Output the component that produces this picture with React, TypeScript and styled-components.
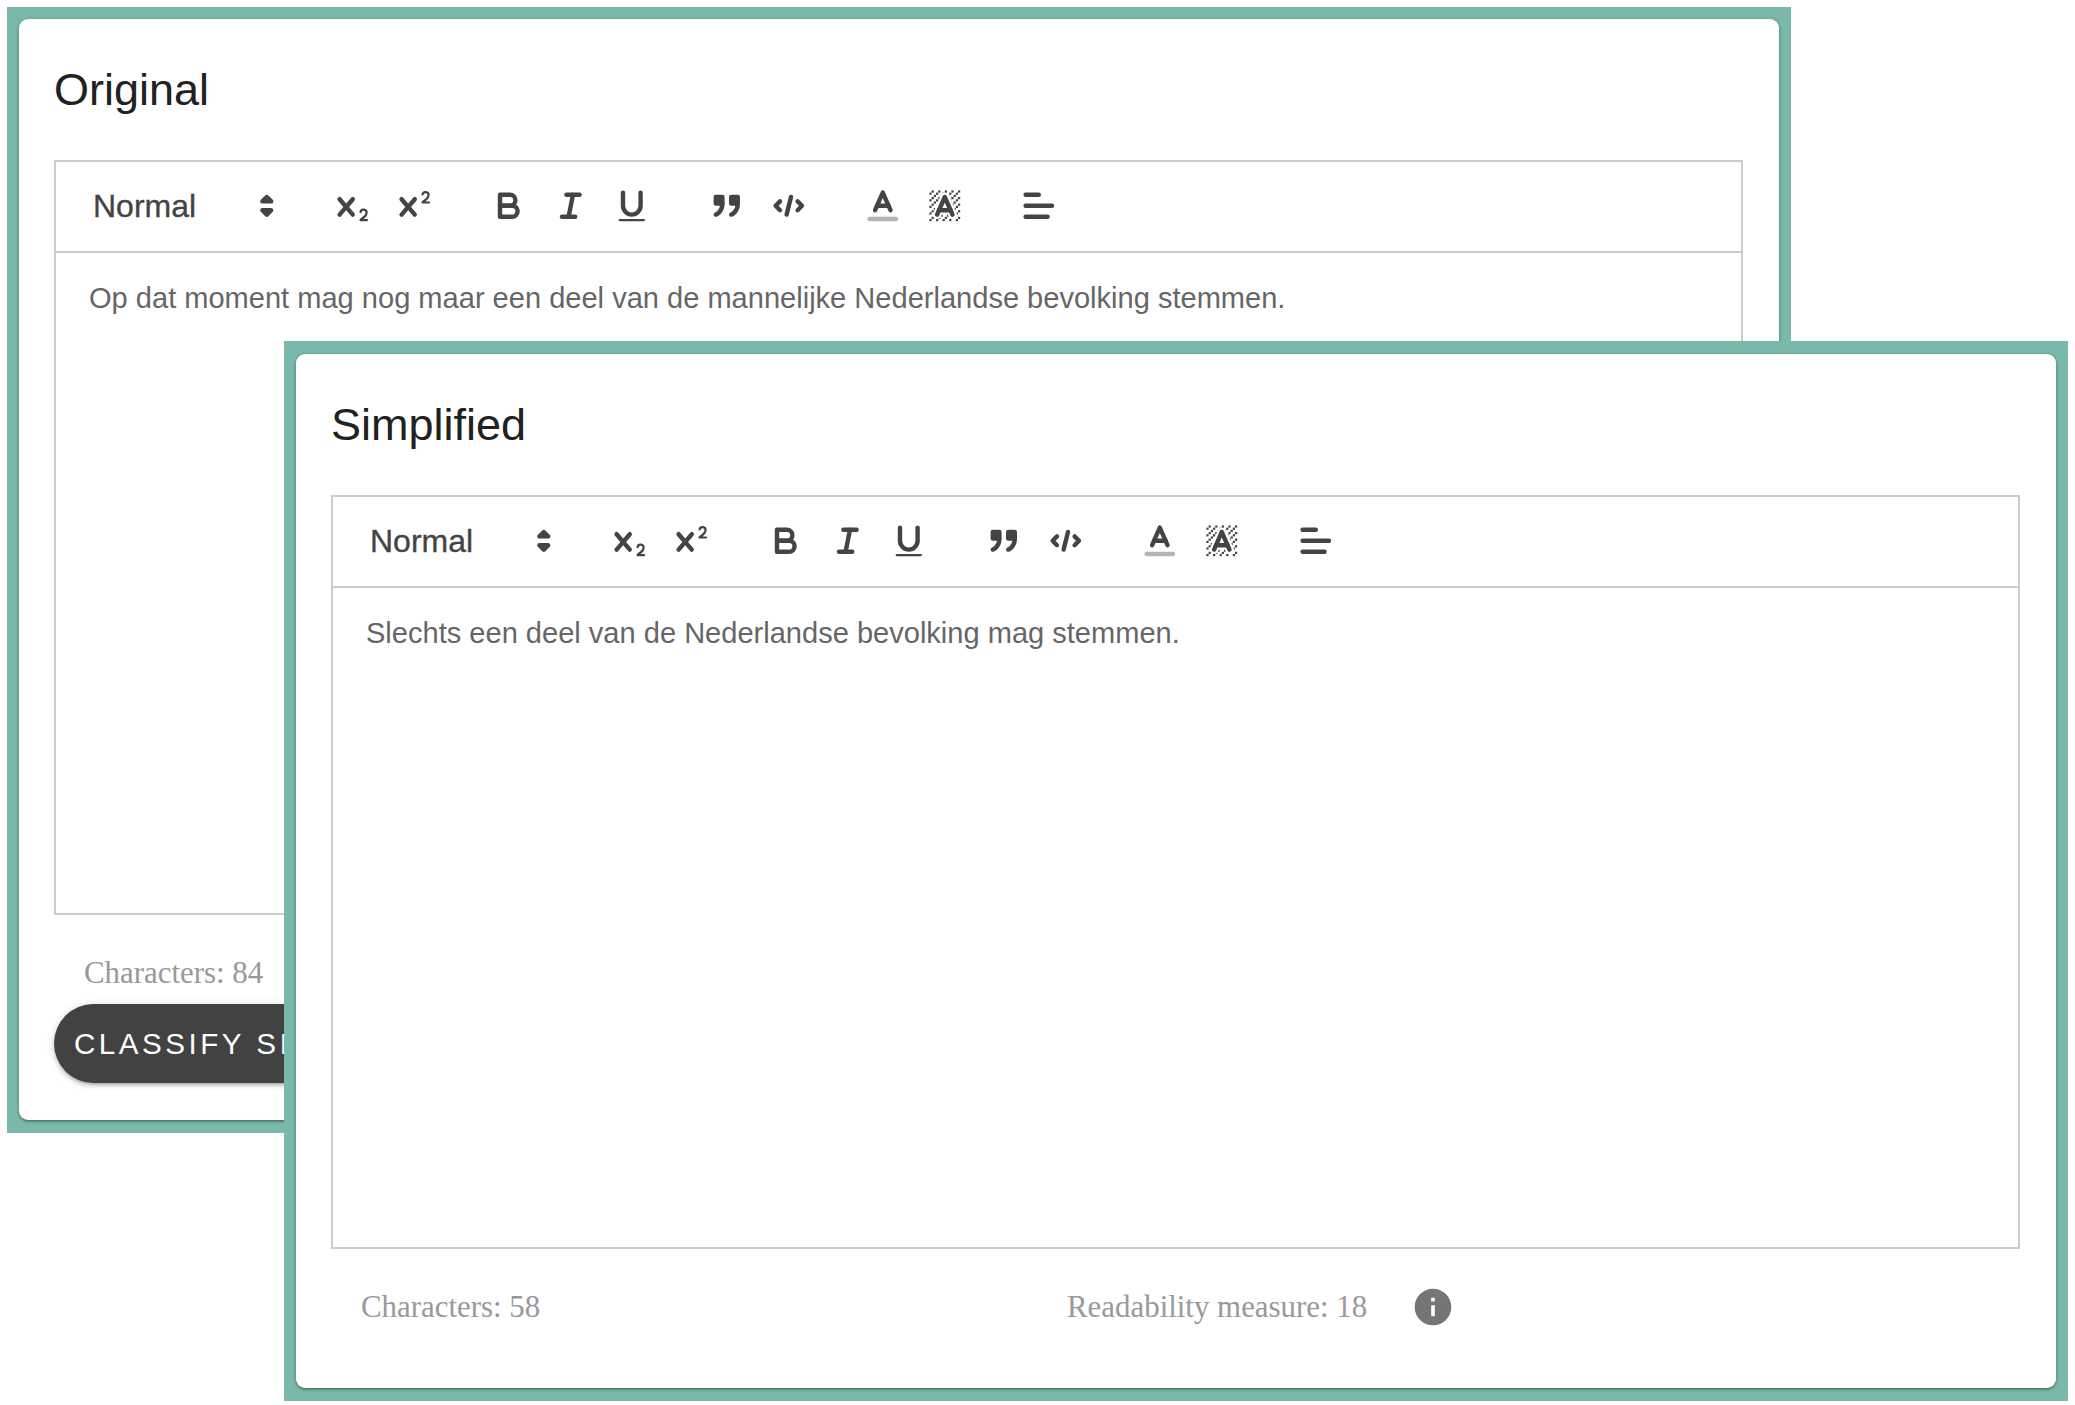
import styled, { createGlobalStyle } from 'styled-components'

const GlobalStyle = createGlobalStyle`
  html, body {
    margin: 0;
    padding: 0;
    background: #fff;
  }
  body {
    font-family: "Liberation Sans", Arial, sans-serif;
  }
`

const Desktop = styled.div`
  position: relative;
  width: 2075px;
  height: 1405px;
  overflow: hidden;
  background: #fff;
`

// the two panels are floating windows that overlap each other
const Window = styled.section<{ $left: number; $top: number; $frameTop: number }>`
  position: absolute;
  left: ${(p) => p.$left}px;
  top: ${(p) => p.$top}px;
  width: 1784px;
  box-sizing: border-box;
  padding: ${(p) => p.$frameTop}px 12px 13px;
  background: #7ab8ab;
`

const Panel = styled.div<{ $height: number }>`
  box-sizing: border-box;
  height: ${(p) => p.$height}px;
  padding: 0 36px 0 35px;
  background: #fff;
  border-radius: 9px;
  box-shadow: 0 2px 3px -1px rgba(0, 0, 0, 0.25), 0 1px 3px 0 rgba(0, 0, 0, 0.2), 0 1px 4px 0 rgba(0, 0, 0, 0.14);
`

const Title = styled.h2`
  margin: 0;
  height: 141px;
  padding-top: 45px;
  box-sizing: border-box;
  font-size: 45px;
  line-height: 52px;
  font-weight: 400;
  color: #212121;
`

const Editor = styled.div<{ $height: number }>`
  height: ${(p) => p.$height}px;
  box-sizing: border-box;
  border: 2px solid #ccc;
  display: flex;
  flex-direction: column;
`

const Toolbar = styled.div`
  flex: none;
  box-sizing: border-box;
  height: 90.5px;
  padding: 18px 18px 18px 19px;
  display: flex;
  align-items: center;
  border-bottom: 2px solid #ccc;
`

const Picker = styled.div`
  width: 214px;
  height: 53px;
  margin-right: 33px;
  padding: 0 2px 0 18px;
  box-sizing: border-box;
  display: flex;
  align-items: center;
  justify-content: space-between;
  font-size: 32px;
  font-weight: 500;
  color: #444;
  -webkit-text-stroke: 0.35px #444;
`

const Group = styled.div`
  display: flex;
  margin-right: 33px;
`

const Tool = styled.span`
  width: 61.6px;
  height: 53px;
  display: flex;
  align-items: center;
  justify-content: center;
`

const Icon = styled.svg`
  width: 39.6px;
  height: 39.6px;
  flex: none;

  .stroke {
    fill: none;
    stroke: #444;
    stroke-width: 2;
    stroke-linecap: round;
    stroke-linejoin: round;
    stroke-miterlimit: 5;
  }
  .fill {
    fill: #444;
  }
  .solid {
    fill: #444;
    stroke: #444;
    stroke-width: 2;
    stroke-linecap: round;
    stroke-linejoin: round;
  }
  .label {
    opacity: 0.4;
  }
`

const Body = styled.div`
  flex: 1;
  padding: 25px 33px;
  font-size: 29.05px;
  line-height: 41px;
  color: #666;
`

const Footer = styled.div`
  height: 116px;
  display: flex;
  align-items: center;
  padding-left: 30px;
  font-family: "Liberation Serif", "Times New Roman", serif;
  font-size: 30.9px;
  color: #999;
`

const Stat = styled.span<{ $width?: number }>`
  flex: none;
  width: ${(p) => (p.$width ? `${p.$width}px` : 'auto')};
`

const InfoIcon = styled.svg`
  width: 44px;
  height: 44px;
  margin-left: 44px;
  fill: #757575;
`

const ActionButton = styled.button`
  display: block;
  height: 79px;
  margin-top: -27px;
  padding: 0 20px;
  border: none;
  border-radius: 40px;
  background: #424242;
  color: #fff;
  font-family: inherit;
  font-size: 29.6px;
  letter-spacing: 3.5px;
  white-space: nowrap;
  box-shadow: 0 3px 3px -2px rgba(0, 0, 0, 0.2), 0 3px 4px 0 rgba(0, 0, 0, 0.14), 0 1px 8px 0 rgba(0, 0, 0, 0.12);
`

const box = (x: number, y: number) => <rect key={`${x}-${y}`} width='1' height='1' x={x} y={y} />

const ditherCells = [
  [4, 4], [2, 6], [3, 5], [4, 7], [2, 12], [2, 9], [2, 15], [3, 8], [12, 2], [11, 3], [2, 3], [6, 2], [3, 2],
  [5, 3], [9, 2], [15, 14], [13, 7], [15, 5], [14, 6], [15, 8], [14, 9], [14, 3], [15, 2], [12, 5], [13, 4],
  [9, 14], [8, 15], [5, 15], [11, 15], [14, 15], [15, 11]
]

const ditherPaths = [
  'M6 6.868V6H5v1h.942z',
  'M6.817 5H6v1h.38z',
  'M4 11.439V11H3v1h.755z',
  'M4.63 10H4v1h.192z',
  'M10.832,4.2L11,4.582V4H10.708A1.948,1.948,0,0,1,10.832,4.2Z',
  'M7,4.582L7.168,4.2A1.929,1.929,0,0,1,7.292,4H7V4.582Z',
  'M8,13H7.683l-0.351.8a1.933,1.933,0,0,1-.124.2H8V13Z',
  'M9,3H8V3.282A1.985,1.985,0,0,1,9,3Z',
  'M13.447 10.174L13.808 11H14V10H13.37z',
  'M3.775,14H3v1H4V14.314A1.97,1.97,0,0,1,3.775,14Z',
  'M12 6.868V6H11.62z',
  'M12.933 9H13V8H12.495z',
  'M6,14.926V15H7V14.316A1.993,1.993,0,0,1,6,14.926Z',
  'M10.668,13.8L10.317,13H10v1h0.792A1.947,1.947,0,0,1,10.668,13.8Z',
  'M14.332,12.2a1.99,1.99,0,0,1,.166.8H15V12H14.245Z'
]

const crossPath =
  'M9.651,5.241a1,1,0,0,0-1.41.108L6,7.964,3.759,5.349a1,1,0,1,0-1.519,1.3L4.683,9.5,2.241,12.35a1,1,0,1,0,1.519,1.3L6,11.036l2.241,2.615a1,1,0,0,0,1.519-1.3L7.317,9.5,9.759,6.651A1,1,0,0,0,9.651,5.241Z'

const icons = {
  arrows: (
    <>
      <polygon className='stroke' points='7 11 9 13 11 11 7 11' />
      <polygon className='stroke' points='7 7 9 5 11 7 7 7' />
    </>
  ),
  sub: (
    <>
      <path
        className='fill'
        d='M15.5,15H13.861a3.858,3.858,0,0,0,1.914-2.975,1.8,1.8,0,0,0-1.6-1.751A1.921,1.921,0,0,0,12.021,11.7a0.50013,0.50013,0,1,0,.957.291h0a0.914,0.914,0,0,1,1.053-.725,0.81,0.81,0,0,1,.744.762c0,1.076-1.16971,1.86982-1.93971,2.43082A1.45639,1.45639,0,0,0,12,15.5a0.5,0.5,0,0,0,.5.5h3A0.5,0.5,0,0,0,15.5,15Z'
      />
      <path className='fill' d={crossPath} />
    </>
  ),
  sup: (
    <>
      <path
        className='fill'
        d='M15.5,7H13.861a4.015,4.015,0,0,0,1.914-2.975,1.8,1.8,0,0,0-1.6-1.751A1.922,1.922,0,0,0,12.021,3.7a0.5,0.5,0,1,0,.957.291,0.917,0.917,0,0,1,1.053-.725,0.81,0.81,0,0,1,.744.762c0,1.077-1.164,1.925-1.934,2.486A1.423,1.423,0,0,0,12,7.5a0.5,0.5,0,0,0,.5.5h3A0.5,0.5,0,0,0,15.5,7Z'
      />
      <path className='fill' d={crossPath} />
    </>
  ),
  bold: (
    <>
      <path className='stroke' d='M5,4H9.5A2.5,2.5,0,0,1,12,6.5v0A2.5,2.5,0,0,1,9.5,9H5V4Z' />
      <path className='stroke' d='M5,9h5.5A2.5,2.5,0,0,1,13,11.5v0A2.5,2.5,0,0,1,10.5,14H5V9Z' />
    </>
  ),
  italic: (
    <>
      <line className='stroke' x1='7' x2='13' y1='4' y2='4' />
      <line className='stroke' x1='5' x2='11' y1='14' y2='14' />
      <line className='stroke' x1='8' x2='10' y1='14' y2='4' />
    </>
  ),
  underline: (
    <>
      <path className='stroke' d='M5,3V9a4.012,4.012,0,0,0,4,4H9a4.012,4.012,0,0,0,4-4V3' />
      <rect className='fill' height='1' rx='0.5' ry='0.5' width='12' x='3' y='15' />
    </>
  ),
  quote: (
    <>
      <rect className='solid' height='3' width='3' x='4' y='5' />
      <rect className='solid' height='3' width='3' x='11' y='5' />
      <path className='solid' d='M7,8c0,4.031-3,5-3,5' />
      <path className='solid' d='M14,8c0,4.031-3,5-3,5' />
    </>
  ),
  code: (
    <>
      <polyline className='stroke' points='5 7 3 9 5 11' />
      <polyline className='stroke' points='13 7 15 9 13 11' />
      <line className='stroke' x1='10' x2='8' y1='5' y2='13' />
    </>
  ),
  color: (
    <>
      <line className='stroke label' x1='3' x2='15' y1='15' y2='15' />
      <polyline className='stroke' points='5.5 11 9 3 12.5 11' />
      <line className='stroke' x1='11.63' x2='6.38' y1='9' y2='9' />
    </>
  ),
  background: (
    <>
      <g className='fill'>
        {ditherCells.map(([x, y]) => box(x, y))}
        {ditherPaths.map((d) => (
          <path key={d} d={d} />
        ))}
      </g>
      <polyline className='stroke' points='5.5 13 9 5 12.5 13' />
      <line className='stroke' x1='11.63' x2='6.38' y1='11' y2='11' />
    </>
  ),
  align: (
    <>
      <line className='stroke' x1='3' x2='15' y1='9' y2='9' />
      <line className='stroke' x1='3' x2='13' y1='14' y2='14' />
      <line className='stroke' x1='3' x2='9' y1='4' y2='4' />
    </>
  )
}

type IconName = keyof typeof icons

const groups: IconName[][] = [['sub', 'sup'], ['bold', 'italic', 'underline'], ['quote', 'code'], ['color', 'background'], ['align']]

function QuillIcon({ name }: { name: IconName }) {
  return <Icon viewBox='0 0 18 18'>{icons[name]}</Icon>
}

function RichEditor({ text, height }: { text: string; height: number }) {
  return (
    <Editor $height={height}>
      <Toolbar>
        <Picker>
          Normal
          <QuillIcon name='arrows' />
        </Picker>
        {groups.map((group) => (
          <Group key={group.join()}>
            {group.map((name) => (
              <Tool key={name}>
                <QuillIcon name={name} />
              </Tool>
            ))}
          </Group>
        ))}
      </Toolbar>
      <Body>{text}</Body>
    </Editor>
  )
}

export default function App() {
  return (
    <Desktop>
      <GlobalStyle />
      <Window $left={7} $top={7} $frameTop={12}>
        <Panel $height={1101}>
          <Title>Original</Title>
          <RichEditor height={755} text='Op dat moment mag nog maar een deel van de mannelijke Nederlandse bevolking stemmen.' />
          <Footer>
            <Stat>Characters: 84</Stat>
          </Footer>
          <ActionButton>CLASSIFY SIMPLIFICATION</ActionButton>
        </Panel>
      </Window>
      <Window $left={284} $top={341} $frameTop={13}>
        <Panel $height={1034}>
          <Title>Simplified</Title>
          <RichEditor height={754} text='Slechts een deel van de Nederlandse bevolking mag stemmen.' />
          <Footer>
            <Stat $width={706}>Characters: 58</Stat>
            <Stat>Readability measure: 18</Stat>
            <InfoIcon viewBox='0 0 24 24'>
              <path d='M12 2C6.48 2 2 6.48 2 12s4.48 10 10 10 10-4.48 10-10S17.52 2 12 2zm1 15h-2v-6h2v6zm0-8h-2V7h2v2z' />
            </InfoIcon>
          </Footer>
        </Panel>
      </Window>
    </Desktop>
  )
}
